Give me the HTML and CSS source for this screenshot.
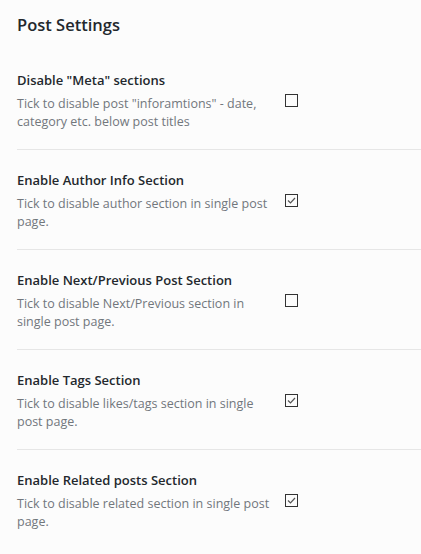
FILE: index.html
```html
<!DOCTYPE html>
<html>
<head>
<meta charset="utf-8">
<link rel="stylesheet" href="styles.css">
</head>
<body>
<div class="panel">
  <h2 class="heading">Post Settings</h2>
  <div class="row">
    <div class="row-title">Disable "Meta" sections</div>
    <div class="row-body">
      <p class="desc">Tick to disable post "inforamtions" - date, category etc. below post titles</p>
      <span class="box"></span>
    </div>
  </div>
  <div class="row">
    <div class="row-title">Enable Author Info Section</div>
    <div class="row-body">
      <p class="desc">Tick to disable author section in single post page.</p>
      <span class="box checked"><svg viewBox="0 0 13 13" width="13" height="13"><path d="M3 6.5 L5.5 9 L10 4" fill="none" stroke="#555" stroke-width="1.2"/></svg></span>
    </div>
  </div>
  <div class="row">
    <div class="row-title">Enable Next/Previous Post Section</div>
    <div class="row-body">
      <p class="desc">Tick to disable Next/Previous section in single post page.</p>
      <span class="box"></span>
    </div>
  </div>
  <div class="row">
    <div class="row-title">Enable Tags Section</div>
    <div class="row-body">
      <p class="desc">Tick to disable likes/tags section in single post page.</p>
      <span class="box checked"><svg viewBox="0 0 13 13" width="13" height="13"><path d="M3 6.5 L5.5 9 L10 4" fill="none" stroke="#555" stroke-width="1.2"/></svg></span>
    </div>
  </div>
  <div class="row">
    <div class="row-title">Enable Related posts Section</div>
    <div class="row-body">
      <p class="desc">Tick to disable related section in single post page.</p>
      <span class="box checked"><svg viewBox="0 0 13 13" width="13" height="13"><path d="M3 6.5 L5.5 9 L10 4" fill="none" stroke="#555" stroke-width="1.2"/></svg></span>
    </div>
  </div>
</div>
</body>
</html>
```

FILE: styles.css
```css
html, body {
  margin: 0;
  padding: 0;
  background: #fcfcfc;
}
body {
  font-family: "Open Sans", "Noto Sans", sans-serif;
  color: #23282d;
}
.panel {
  padding-left: 17px;
}
.heading {
  margin: 0;
  padding-top: 14px;
  height: 50px;
  box-sizing: border-box;
  font-size: 16.5px;
  line-height: 22px;
  font-weight: 600;
  color: #23282d;
}
.row {
  padding: 21px 0 18px;
  border-top: 1px solid #e6e6e6;
}
.row:first-of-type {
  border-top: 0;
}
.row-title {
  font-size: 13px;
  line-height: 18px;
  font-weight: 600;
  margin-bottom: 6px;
}
.row-body {
  display: flex;
  align-items: flex-start;
}
.desc {
  margin: 0;
  width: 260px;
  font-size: 12.5px;
  line-height: 18px;
  color: #72777c;
}
.box {
  margin-left: 8px;
  margin-top: -1px;
  width: 13px;
  height: 13px;
  box-sizing: border-box;
  border: 1px solid #333;
  display: block;
  position: relative;
}
.box svg {
  position: absolute;
  left: -1px;
  top: -1px;
}
```
